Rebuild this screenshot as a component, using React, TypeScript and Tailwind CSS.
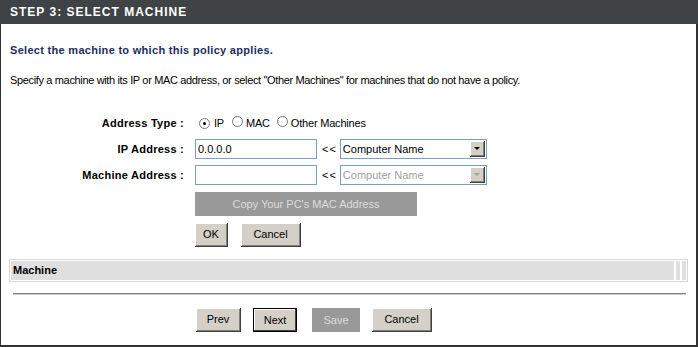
import React from "react";

const font = { fontFamily: '"Liberation Sans", Arial, sans-serif' };

function Radio({ checked }: { checked?: boolean }) {
  return (
    <span className="inline-flex h-[11px] w-[11px] items-center justify-center rounded-full border border-[#7b7b7b] bg-white">
      {checked && <span className="h-[3px] w-[3px] rounded-full bg-black" />}
    </span>
  );
}

function WinButton({ label, className, isDefault }: { label: string; className: string; isDefault?: boolean }) {
  return (
    <button
      className={`flex h-[24px] items-center justify-center bg-[#d4d0c8] text-[11px] text-black ${
        isDefault
          ? "border border-black shadow-[inset_-1px_-1px_0_#404040,inset_1px_1px_0_#ffffff]"
          : "border-r border-b border-[#404040] shadow-[inset_1px_1px_0_#ffffff,inset_-1px_-1px_0_#808080]"
      } ${className}`}
    >
      {label}
    </button>
  );
}

function DisabledButton({ label, className }: { label: string; className: string }) {
  return (
    <button className={`flex h-[24px] items-center justify-center bg-[#999999] text-[11px] text-[#dcdcdc] ${className}`}>
      {label}
    </button>
  );
}

function Select({ disabled }: { disabled?: boolean }) {
  return (
    <div className="flex h-[20px] w-[147px] items-center border border-[#7f9db9] bg-white pl-[2px] pr-[1px]">
      <span className={`flex-1 text-[11px] ${disabled ? "text-[#a0a0a0]" : "text-black"}`}>Computer Name</span>
      <span className="flex h-[16px] w-[15px] items-center justify-center border-r border-b border-[#404040] bg-[#d4d0c8] shadow-[inset_1px_1px_0_#ffffff,inset_-1px_-1px_0_#808080]">
        <span
          className={`h-0 w-0 border-x-[3px] border-t-[3px] border-x-transparent ${
            disabled ? "border-t-[#a0a0a0]" : "border-t-black"
          }`}
        />
      </span>
    </div>
  );
}

function TextInput({ value }: { value?: string }) {
  return (
    <div className="flex h-[20px] w-[122px] items-center border border-[#7f9db9] bg-white px-[2px] text-[11px] text-black">
      {value}
    </div>
  );
}

export default function App() {
  return (
    <div className="flex h-[347px] w-[698px] flex-col bg-white" style={font}>
      <div className="flex h-[24px] items-center bg-[#404345] pl-[10px] text-[12px] font-bold tracking-[1px] text-white">
        STEP 3: SELECT MACHINE
      </div>
      <div className="flex flex-1 flex-col border-l border-r-2 border-b-2 border-[#333333]">
        <div className="mt-[18px] pl-[9px] text-[11px] font-bold tracking-[0.3px] text-[#1a2f60]">
          Select the machine to which this policy applies.
        </div>
        <div className="mt-[13px] pl-[9px] text-[11px] tracking-[-0.35px] text-black">
          Specify a machine with its IP or MAC address, or select "Other Machines" for machines that do not have a policy.
        </div>

        <div className="mt-[25px] flex flex-col gap-[6px] text-[11px]">
          <div className="flex h-[20px] items-center">
            <div className="w-[185px] pr-[2px] text-right font-bold tracking-[0.25px]">Address Type :</div>
            <div className="ml-[13px] flex items-center tracking-[-0.2px]">
              <Radio checked />
              <span className="ml-[4px]">IP</span>
              <span className="ml-[8px]"><Radio /></span>
              <span className="ml-[3px]">MAC</span>
              <span className="ml-[7px]"><Radio /></span>
              <span className="ml-[3px]">Other Machines</span>
            </div>
          </div>
          <div className="flex h-[20px] items-center">
            <div className="w-[185px] pr-[2px] text-right font-bold tracking-[0.25px]">IP Address :</div>
            <div className="ml-[9px] flex items-center">
              <TextInput value="0.0.0.0" />
              <span className="ml-[5px] mr-[3px] tracking-[1px]">&lt;&lt;</span>
              <Select />
            </div>
          </div>
          <div className="flex h-[20px] items-center">
            <div className="w-[185px] pr-[2px] text-right font-bold tracking-[0.25px]">Machine Address :</div>
            <div className="ml-[9px] flex items-center">
              <TextInput />
              <span className="ml-[5px] mr-[3px] tracking-[1px]">&lt;&lt;</span>
              <Select disabled />
            </div>
          </div>
          <div className="ml-[194px] mt-[1px]">
            <DisabledButton label="Copy Your PC's MAC Address" className="w-[222px]" />
          </div>
          <div className="ml-[194px] mt-[1px] flex gap-[13px]">
            <WinButton label="OK" className="w-[33px]" />
            <WinButton label="Cancel" className="w-[60px]" />
          </div>
        </div>

        <div className="ml-[8px] mt-[12px] flex h-[23px] w-[679px] border border-[#d8d8d8]">
          <div className="flex flex-1 items-center border border-white bg-[#dfdfdf] pl-[2px] text-[11px] font-bold text-black">
            Machine
          </div>
          <div className="w-[6px] border border-white bg-[#dfdfdf]" />
          <div className="w-[6px] border border-white bg-[#dfdfdf]" />
        </div>

        <div className="ml-[12px] mt-[11px] h-[2px] w-[673px] border-t border-b border-t-[#808080] border-b-[#d4d0c8]" />

        <div className="ml-[195px] mt-[13px] flex gap-[12px]">
          <WinButton label="Prev" className="w-[45px]" />
          <WinButton label="Next" className="w-[44px]" isDefault />
          <DisabledButton label="Save" className="ml-[3px] w-[48px]" />
          <WinButton label="Cancel" className="w-[60px]" />
        </div>
      </div>
    </div>
  );
}
